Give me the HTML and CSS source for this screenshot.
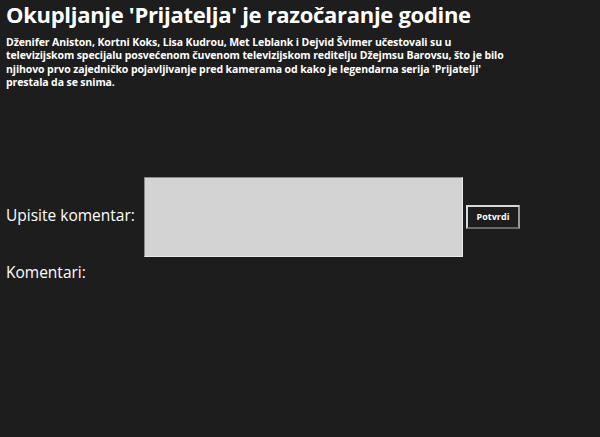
FILE: index.html
```html
<!DOCTYPE html>
<html>
<head>
<meta charset="utf-8">
<link rel="stylesheet" href="styles.css">
</head>
<body>
<div class="page">
  <h1 class="title">Okupljanje 'Prijatelja' je razočaranje godine</h1>
  <p class="lead">Dženifer Aniston, Kortni Koks, Lisa Kudrou, Met Leblank i Dejvid Švimer učestovali su u televizijskom specijalu posvećenom čuvenom televizijskom reditelju Džejmsu Barovsu, što je bilo njihovo prvo zajedničko pojavljivanje pred kamerama od kako je legendarna serija 'Prijatelji' prestala da se snima.</p>
  <div class="comment-row">
    <label class="label">Upisite komentar:</label>
    <textarea class="input"></textarea>
    <button class="btn">Potvrdi</button>
  </div>
  <div class="label comments">Komentari:</div>
</div>
</body>
</html>
```
FILE: styles.css
```css
html, body {
  margin: 0;
  padding: 0;
  background: #1d1d1d;
  color: #ffffff;
  font-family: "Open Sans", "Noto Sans", sans-serif;
}
.page {
  padding: 0 6px;
}
.title {
  margin: 0;
  font-size: 22px;
  font-weight: 700;
  line-height: 28px;
  letter-spacing: -0.3px;
}
.lead {
  margin: 8px 0 0 0;
  font-size: 10.5px;
  font-weight: 700;
  line-height: 13.3px;
  width: 500px;
  letter-spacing: -0.1px;
}
.comment-row {
  display: flex;
  align-items: center;
  margin-top: 88px;
}
.label {
  font-size: 15.5px;
  line-height: 20px;
}
.comment-row .label {
  width: 138px;
  flex-shrink: 0;
  margin-top: -4px;
}
.input {
  box-sizing: border-box;
  flex-shrink: 0;
  width: 319px;
  height: 80px;
  margin: 0;
  background: #d3d3d3;
  border: 1px solid #e8e8e8;
  border-top-color: #8a8a8a;
  border-left-color: #8a8a8a;
  resize: none;
  outline: none;
}
.btn {
  box-sizing: border-box;
  flex-shrink: 0;
  width: 54px;
  height: 24px;
  margin-left: 3px;
  margin-top: -1px;
  background: #1d1d1d;
  color: #fff;
  border: 2px solid #d8d8d8;
  border-bottom-color: #6a6a6a;
  border-right-color: #9a9a9a;
  font-family: "Open Sans", sans-serif;
  font-weight: 700;
  font-size: 9px;
  padding: 0;
}
.comments {
  margin-top: 5px;
}
```
